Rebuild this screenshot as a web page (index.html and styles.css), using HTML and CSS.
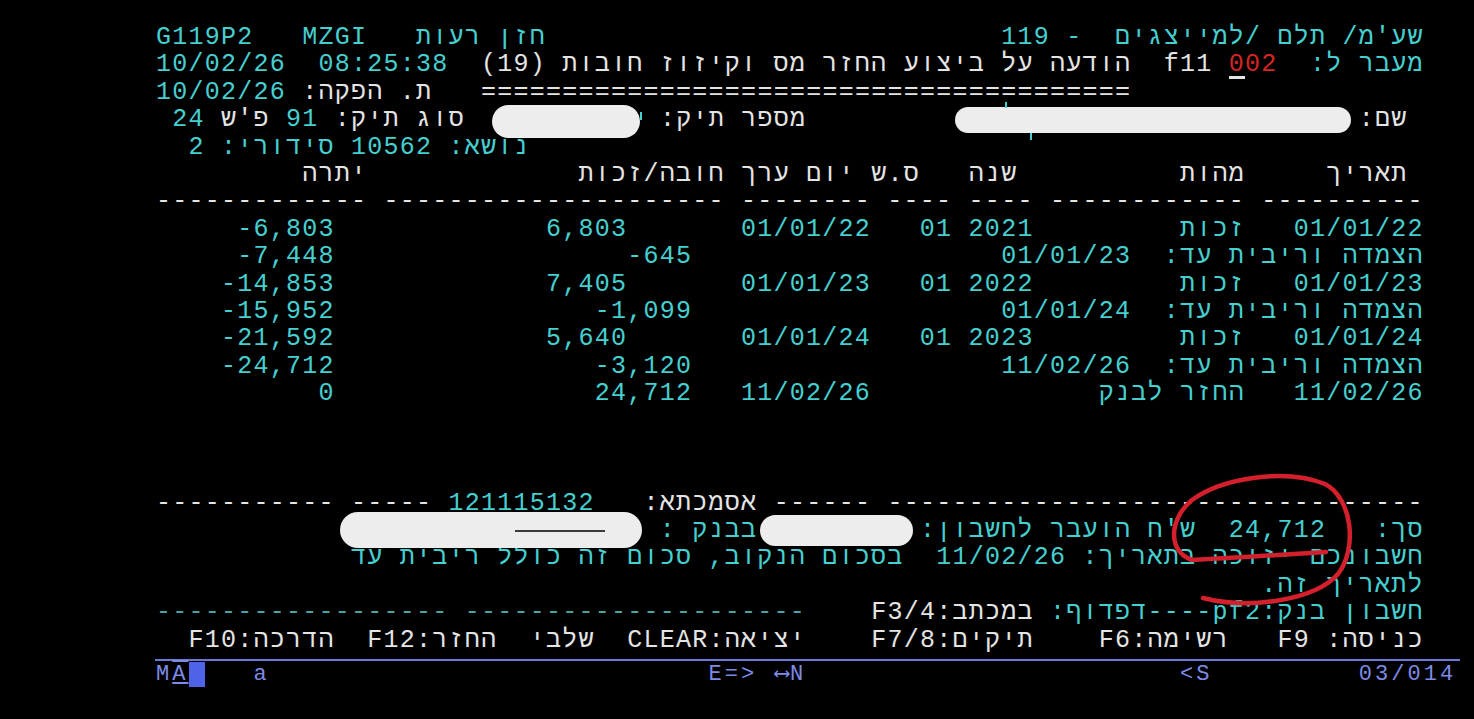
FILE: index.html
```html
<!DOCTYPE html>
<html lang="he">
<head>
  <meta charset="UTF-8">
  <title>G119P2 MZGI</title>
  <link rel="stylesheet" href="styles.css">
</head>
<body>

  <div class="term">
    <div class="screen">
<div class="ln c">G119P2   MZGI   <bdo dir="rtl">חזן רעות</bdo>                            119 -  <bdo dir="rtl">שע'מ/ תלם /למייצגים</bdo></div>
<div class="ln"><span class="c">10/02/26  08:25:38</span>  <span class="w">(19) <bdo dir="rtl">הודעה על ביצוע החזר מס וקיזוז חובות</bdo>  f11</span> <span class="r"><span class="cur">0</span>02</span>  <bdo dir="rtl" class="c">מעבר ל:</bdo></div>
<div class="ln"><span class="c">10/02/26</span> <span class="w"><bdo dir="rtl">ת. הפקה:</bdo>   ========================================</span></div>
<div class="ln w"> <span class="c">24</span> <bdo dir="rtl">פ'ש</bdo> <span class="c">91</span> <bdo dir="rtl">סוג תיק:</bdo>            <bdo dir="rtl">מספר תיק:</bdo>                                  <bdo dir="rtl">שם:</bdo></div>
<div class="ln c">  2 <bdo dir="rtl">סידורי:</bdo> 10562 <bdo dir="rtl">נושא:</bdo></div>
<div class="ln w">         <bdo dir="rtl">יתרה</bdo>             <bdo dir="rtl">חובה/זכות</bdo> <bdo dir="rtl">יום ערך</bdo> <bdo dir="rtl">ס.ש</bdo>   <bdo dir="rtl">שנה</bdo>          <bdo dir="rtl">מהות</bdo>     <bdo dir="rtl">תאריך</bdo></div>
<div class="ln w">------------- --------------------- -------- ---- ---- ------------ ----------</div>
<div class="ln c">     -6,803             6,803       01/01/22   01 2021         <bdo dir="rtl">זכות</bdo>   01/01/22</div>
<div class="ln c">     -7,448                  -645                   01/01/23  <bdo dir="rtl">הצמדה וריבית עד:</bdo></div>
<div class="ln c">    -14,853             7,405       01/01/23   01 2022         <bdo dir="rtl">זכות</bdo>   01/01/23</div>
<div class="ln c">    -15,952                -1,099                   01/01/24  <bdo dir="rtl">הצמדה וריבית עד:</bdo></div>
<div class="ln c">    -21,592             5,640       01/01/24   01 2023         <bdo dir="rtl">זכות</bdo>   01/01/24</div>
<div class="ln c">    -24,712                -3,120                   11/02/26  <bdo dir="rtl">הצמדה וריבית עד:</bdo></div>
<div class="ln c">          0                24,712   11/02/26              <bdo dir="rtl">החזר לבנק</bdo>   11/02/26</div>
<div class="ln"></div>
<div class="ln"></div>
<div class="ln"></div>
<div class="ln w">----------- ----- <span class="c">121115132</span>   <bdo dir="rtl">אסמכתא:</bdo> ------ ---------------------------------</div>
<div class="ln c">                               <bdo dir="rtl">בבנק :</bdo>          <bdo dir="rtl">ש'ח הועבר לחשבון:</bdo>  24,712   <bdo dir="rtl">סך:</bdo></div>
<div class="ln c">            <bdo dir="rtl">בסכום הנקוב, סכום זה כולל ריבית עד</bdo>  11/02/26 <bdo dir="rtl">בתאריך:</bdo> <bdo dir="rtl">חשבונכם יזוכה</bdo></div>
<div class="ln c">                                                                    <bdo dir="rtl">לתאריך זה.</bdo></div>
<div class="ln"><span class="d">------------------ ---------------------</span>    <span class="w">F3/4:<bdo dir="rtl">במכתב</bdo></span> <span class="c"><bdo dir="rtl">דפדוף:</bdo>----pf2<bdo dir="rtl">חשבון בנק:</bdo></span></div>
<div class="ln w">  F10:<bdo dir="rtl">הדרכה</bdo>  F12:<bdo dir="rtl">שלבי  החזר</bdo>  CLEAR:<bdo dir="rtl">יציאה</bdo>    F7/8:<bdo dir="rtl">תיקים</bdo>    F6:<bdo dir="rtl">רשימה</bdo>   F9 <bdo dir="rtl">כניסה:</bdo></div>
    </div>

    <div class="rule"></div>
<div class="status">M<span class="au">A</span><span class="blk"> </span>   a                           E=&gt; <span class="arr">⟷</span>N                       &lt;S         03/014</div>

    <!-- redactions -->
    <div class="blot b1"></div>
    <div class="blot b2"></div>
    <div class="blot b3"><span class="streak"></span></div>
    <div class="blot b4"></div>
    <span class="tick t1"></span>
    <span class="tick t2"></span>
    <span class="tick t3"></span>

    <!-- hand-drawn circle -->
    <svg class="mark" width="1474" height="719" viewBox="0 0 1474 719">
      <path d="M1326 552 C1290 554 1230 558 1192 560 C1168 552 1168 520 1192 500 C1222 478 1285 468 1325 484 C1352 498 1358 548 1338 574 C1315 600 1250 610 1203 598" fill="none" stroke="#d3202c" stroke-width="4.5" stroke-linecap="round"/>
    </svg>
  </div>

</body>
</html>
```

FILE: styles.css
```css
body {
  margin: 0;
  background: #000;
}

.term {
  position: relative;
  width: 1474px;
  height: 719px;
  overflow: hidden;
  background: #000;
  font-family: "Liberation Mono", "DejaVu Sans Mono", monospace;
}

.screen {
  padding: 24px 0 0 156px;
  font-size: 25px;
  letter-spacing: 1.25px;
}

.ln {
  height: 27.4px;
  line-height: 27.4px;
  white-space: pre;
  unicode-bidi: bidi-override;
  direction: ltr;
}

.c { color: #45cfcf; }
.w { color: #e4e4e4; }
.r { color: #d62424; }
.d { color: #4aa3a3; }

.cur {
  box-shadow: inset 0 -3px #e4e4e4;
}

.rule {
  margin: 5px 0 0 155px;
  width: 1305px;
  height: 2px;
  background: #6a78d6;
}

.status {
  padding-left: 156px;
  height: 28px;
  line-height: 28px;
  font-size: 22px;
  letter-spacing: 3.05px;
  color: #7d8be6;
  white-space: pre;
}

.arr {
  display: inline-block;
  width: 16.25px;
  letter-spacing: 0;
  text-align: center;
}

.au {
  text-decoration: underline overline;
}

.blk {
  background: #4f63e8;
}

.blot {
  position: absolute;
  background: #ededed;
  border-radius: 18px;
}

.b1 { left: 492px; top: 105px; width: 148px; height: 33px; }
.b2 { left: 955px; top: 107px; width: 396px; height: 26px; border-radius: 13px; }
.b3 { left: 340px; top: 512px; width: 302px; height: 36px; }
.b4 { left: 760px; top: 515px; width: 153px; height: 31px; }

.streak {
  position: absolute;
  left: 175px;
  top: 18px;
  width: 90px;
  height: 2px;
  background: #3a3a3a;
}

.tick {
  position: absolute;
  width: 2px;
  background: #45cfcf;
}

.t1 { left: 640px; top: 112px; height: 8px; }
.t2 { left: 1005px; top: 102px; height: 6px; }
.t3 { left: 1030px; top: 133px; height: 7px; }

.mark {
  position: absolute;
  left: 0;
  top: 0;
  pointer-events: none;
}
```
